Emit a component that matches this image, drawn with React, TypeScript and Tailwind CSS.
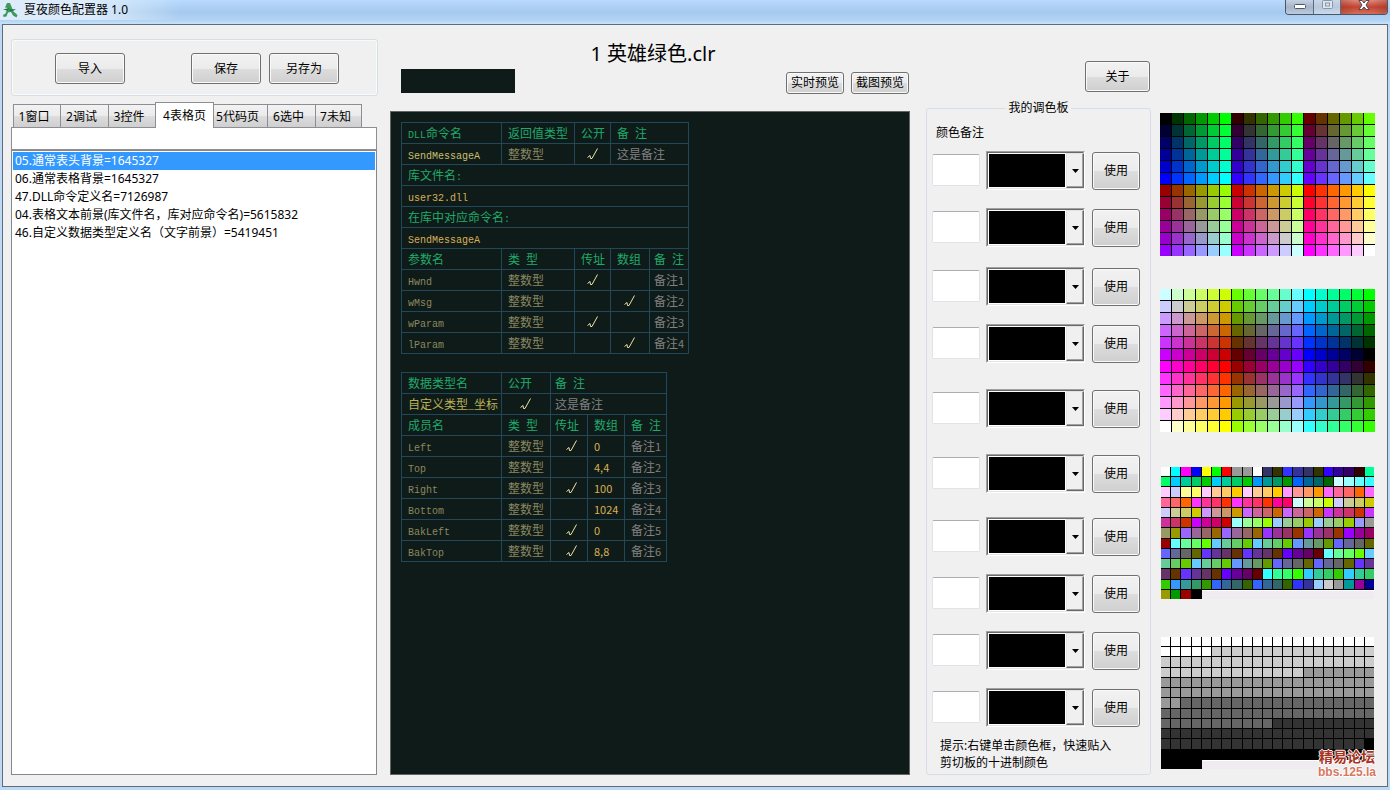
import type { ReactNode } from "react";
import { clsx } from "clsx";

const TABS = [
  { label: "1窗口", width: "w-12" },
  { label: "2调试", width: "w-[49px]" },
  { label: "3控件", width: "w-12" },
  { label: "4表格页", width: "w-[59px]", active: true },
  { label: "5代码页", width: "w-[55px]" },
  { label: "6选中", width: "w-[49px]" },
  { label: "7未知", width: "w-[47px]" },
];

const ENTRIES = [
  "05.通常表头背景=1645327",
  "06.通常表格背景=1645327",
  "47.DLL命令定义名=7126987",
  "04.表格文本前景(库文件名，库对应命令名)=5615832",
  "46.自定义数据类型定义名（文字前景）=5419451",
];

// space above each row of the custom palette
const PALETTE_ROWS = [
  "mt-2.5",
  "mt-4.5",
  "mt-5",
  "mt-4.5",
  "mt-[26px]",
  "mt-[26px]",
  "mt-6",
  "mt-4.5",
  "mt-4.5",
  "mt-4.5",
];

const STEPS = ["00", "33", "66", "99", "cc", "ff"];

// 18 x 12 cube, three red levels side by side in each half
const CUBE = Array.from({ length: 12 * 18 }, (_, i) => {
  const row = Math.floor(i / 18);
  const col = i % 18;
  const red = Math.floor(col / 6) + (row >= 6 ? 3 : 0);
  return `#${STEPS[red]}${STEPS[col % 6]}${STEPS[row % 6]}`;
});

const WHEEL = Array.from({ length: 12 * 18 }, (_, i) => {
  const row = Math.floor(i / 18);
  const col = i % 18;
  const block = Math.floor(col / 6);
  const up = STEPS[col % 6];
  const down = STEPS[5 - (col % 6)];
  const top = row < 6;
  const second = top ? STEPS[5 - row] : STEPS[row - 6];
  if (block === 0) return `#${top ? "cc" : "ff"}${second}${down}`;
  if (block === 1) return `#${top ? "66" : "99"}${second}${up}`;
  return `#${top ? "00" : "33"}${second}${down}`;
});

const MIXED = `
fff 0ff f0f 00f ff0 0f0 f00 999 999 fff 336 330 33f 339 336 330 30f 309 306 300 0f9
0f6 0cf 0c9 0c6 0c0 0cf 0c9 0c6 0c0 09f 099 096 090 06f 069 066 060 cff 9ff 6ff 3ff
fcf ccf ff9 ff6 fcf fc9 fc6 fc0 fcf fc9 fc6 fc0 f9f f99 f96 f90 f6f f69 f66 f60 f6f
f69 f66 f60 f3f f39 f36 f30 f3f f39 f36 f30 f09 f06 cff cf9 cf6 cf0 ccf cc9 cc6 cc0
ccf cc9 cc6 cc0 c9f c99 c96 c90 c6f c69 c66 c60 c6f c69 c66 c60 c3f c39 c36 c30 c3f
c39 c36 c30 c0f c09 c06 c00 9ff 9f9 9f6 9f0 9cf 9c9 9c6 9c0 9cf 9c9 9c6 9c0 99f 999
996 990 96f 969 966 960 96f 969 966 960 93f 939 936 930 93f 939 936 930 90f 909 906
900 6ff 6f9 6f6 6f0 6cf 6c9 6c6 6c0 6cf 6c9 6c6 6c0 69f 699 696 690 66f 669 666 660
66f 669 666 660 63f 639 636 630 63f 639 636 630 60f 609 606 600 6ff 6f9 6f6 6f0 6cf
6c9 6c6 6c0 6cf 6c9 6c6 6c0 69f 699 696 690 66f 669 666 660 66f 669 666 660 63f 639
636 630 63f 639 636 630 60f 609 606 600 3ff 3f9 3f6 3f0 3cf 3c9 3c6 3c0 3cf 3c9 3c6
3c0 39f 399 396 390 36f 369 366 360 36f 369 366 360 33f 339 9cf ccc 999 099 909 009
990 090 900 000`
  .trim()
  .split(/\s+/)
  .map((c) => `#${c}`);

const GREYS = Array.from({ length: 256 }, (_, i) => {
  if (i < 26) return "#fff";
  if (i < 77) return "#ccc";
  if (i < 128) return "#999";
  if (i < 179) return "#666";
  if (i < 230) return "#333";
  return "#000";
});

function Button({ className, children }: { className?: string; children: ReactNode }) {
  return (
    <button
      type="button"
      className={clsx(
        "shrink-0 whitespace-nowrap rounded-[3px] border border-[#707070] bg-[linear-gradient(#f2f2f2,#ebebeb_50%,#dddddd_50%,#cfcfcf)] text-center shadow-[inset_0_0_0_1px_#fafafa]",
        className,
      )}
    >
      {children}
    </button>
  );
}

function Check() {
  return (
    <svg className="mx-auto block h-3 w-3" viewBox="0 0 12 12" fill="none" stroke="#efe3a4" aria-hidden="true">
      <path d="M.5 9.500 L3 7.500 L3.500 10.500 L5 10.500 L10.500 .5" />
    </svg>
  );
}

// Latin runs sit at half the width of a Chinese character
function Mono({ text }: { text: string }) {
  return (
    <>
      {text.split(/([\x20-\x7e]+)/).map((part, i) =>
        i % 2 ? (
          <span
            key={i}
            className={clsx(
              "leading-none",
              /^[\d,]+$/.test(part) ? "font-['Noto_Sans_CJK_SC',sans-serif] text-[11px]" : "text-[10px]",
            )}
          >
            {part}
          </span>
        ) : (
          part
        ),
      )}
    </>
  );
}

type CellProps = { color?: string; span?: number; shift?: boolean; children?: string };

function Cell({ color = "text-[#8a8860]", span, shift, children = "" }: CellProps) {
  const isCheck = children === "√";
  return (
    <td
      colSpan={span}
      className={clsx(
        "h-[21px] border border-[#21475b] p-0 whitespace-pre align-middle leading-4",
        isCheck ? "text-center" : shift ? "pt-[3px] pl-1" : "pt-[3px] pl-1.5",
        isCheck && shift && "pl-1.5",
        color,
      )}
    >
      {isCheck ? (
        <Check />
      ) : (
        <div className="h-4">
          <Mono text={children} />
        </div>
      )}
    </td>
  );
}

const HEAD = "text-[#1faa6d]";
const NAME = "text-[#cbbf6c]";
const VALUE = "text-[#d8b055]";
const NOTE = "text-[#808080]";

const PARAMS = [
  ["Hwnd", "√", "", "备注1"],
  ["wMsg", "", "√", "备注2"],
  ["wParam", "√", "", "备注3"],
  ["lParam", "", "√", "备注4"],
];

const MEMBERS = [
  ["Left", "√", "0", "备注1"],
  ["Top", "", "4,4", "备注2"],
  ["Right", "√", "100", "备注3"],
  ["Bottom", "", "1024", "备注4"],
  ["BakLeft", "√", "0", "备注5"],
  ["BakTop", "√", "8,8", "备注6"],
];

const TABLE =
  "table-fixed border-collapse font-['Liberation_Mono','Noto_Sans_CJK_SC',monospace] text-xs";

function CommandTable() {
  return (
    <table className={clsx(TABLE, "w-[288px]")}>
      <colgroup>
        <col className="w-[100px]" />
        <col className="w-[73px]" />
        <col className="w-9" />
        <col className="w-[39px]" />
        <col className="w-[39px]" />
      </colgroup>
      <tbody>
        <tr>
          <Cell color={HEAD}>DLL命令名</Cell>
          <Cell color={HEAD}>返回值类型</Cell>
          <Cell color={HEAD}>公开</Cell>
          <Cell color={HEAD} span={2}>备 注</Cell>
        </tr>
        <tr>
          <Cell color={NAME}>SendMessageA</Cell>
          <Cell>整数型</Cell>
          <Cell>√</Cell>
          <Cell color={NOTE} span={2}>这是备注</Cell>
        </tr>
        <tr><Cell color={HEAD} span={5}>库文件名:</Cell></tr>
        <tr><Cell color={VALUE} span={5}>user32.dll</Cell></tr>
        <tr><Cell color={HEAD} span={5}>在库中对应命令名:</Cell></tr>
        <tr><Cell color={VALUE} span={5}>SendMessageA</Cell></tr>
        <tr>
          <Cell color={HEAD}>参数名</Cell>
          <Cell color={HEAD}>类 型</Cell>
          <Cell color={HEAD}>传址</Cell>
          <Cell color={HEAD}>数组</Cell>
          <Cell color={HEAD} shift>备 注</Cell>
        </tr>
        {PARAMS.map(([name, byRef, array, note]) => (
          <tr key={name}>
            <Cell>{name}</Cell>
            <Cell>整数型</Cell>
            <Cell>{byRef}</Cell>
            <Cell>{array}</Cell>
            <Cell color={NOTE} shift>{note}</Cell>
          </tr>
        ))}
      </tbody>
    </table>
  );
}

function TypeTable() {
  return (
    <table className={clsx(TABLE, "mt-[18px] w-[266px]")}>
      <colgroup>
        <col className="w-[100px]" />
        <col className="w-[49px]" />
        <col className="w-[37px]" />
        <col className="w-[37px]" />
        <col className="w-[42px]" />
      </colgroup>
      <tbody>
        <tr>
          <Cell color={HEAD}>数据类型名</Cell>
          <Cell color={HEAD}>公开</Cell>
          <Cell color={HEAD} shift span={3}>备 注</Cell>
        </tr>
        <tr>
          <Cell color="text-[#bbb152]">自定义类型_坐标</Cell>
          <Cell>√</Cell>
          <Cell color={NOTE} shift span={3}>这是备注</Cell>
        </tr>
        <tr>
          <Cell color={HEAD}>成员名</Cell>
          <Cell color={HEAD}>类 型</Cell>
          <Cell color={HEAD} shift>传址</Cell>
          <Cell color={HEAD}>数组</Cell>
          <Cell color={HEAD}>备 注</Cell>
        </tr>
        {MEMBERS.map(([name, byRef, array, note]) => (
          <tr key={name}>
            <Cell>{name}</Cell>
            <Cell>整数型</Cell>
            <Cell shift>{byRef}</Cell>
            <Cell color={VALUE}>{array}</Cell>
            <Cell color={NOTE}>{note}</Cell>
          </tr>
        ))}
      </tbody>
    </table>
  );
}

function Swatches({ colors, className }: { colors: string[]; className: string }) {
  return (
    <div className={clsx("grid gap-px bg-black", className)}>
      {colors.map((color, i) => (
        <span key={i} style={{ backgroundColor: color }} />
      ))}
      {colors.length === 256 && <span className="col-span-17 border-t border-white bg-[#eeecee]" />}
    </div>
  );
}

function TitleBar() {
  return (
    <header className="flex h-6 items-start bg-[linear-gradient(#b9dafd,#a6c9ee_50%,#b2d3f3_85%,#c6e4f9)] pr-0.5">
      <div className="flex h-5 flex-1 items-center gap-1.5 bg-[linear-gradient(90deg,#dcecfb,#dcecfb_90px,transparent_180px)] pl-0.5">
        <svg className="size-4" viewBox="0 0 16 16" aria-hidden="true">
          <path
            d="M5 1h3l3.500 8.500 4 3.500-1 2.500-3.500-2-2-3.500-3 .5-1.500 4-3 .5-.5-2 2.500-1.500L5.500 6 3 5.500z"
            fill="#3f9a5c"
          />
          <path d="M6.500 5.500 6 8.500l2-.3zM1 7.500l4-1 4 1 5-.5-3.500 2.200L5 8.500z" fill="#237443" />
        </svg>
        <h1 className="text-xs">夏夜颜色配置器 1.0</h1>
      </div>
      <div className="flex h-[15px] overflow-hidden rounded-b-[4px] border border-t-0 border-[#4a5566]">
        <button
          type="button"
          aria-label="最小化"
          className="flex w-7 items-center justify-center border-r border-[#5f6c80] bg-[linear-gradient(#c5d2e2,#a4b4c9_50%,#bccbde)]"
        >
          <svg className="h-1.5 w-3" viewBox="0 0 12 6">
            <rect x=".5" y=".5" width="11" height="4" rx="1" fill="#fff" stroke="#535666" />
          </svg>
        </button>
        <button
          type="button"
          aria-label="最大化"
          className="flex w-[27px] justify-center border-r border-[#5f6c80] bg-[linear-gradient(#c9d8e9,#b8c9dd_50%,#cbdaea)]"
        >
          <svg className="h-[9px] w-[11px]" viewBox="0 0 11 9" fill="#dce6f0" stroke="#8996a8">
            <rect x=".5" y=".5" width="10" height="8" rx="1" />
            <rect x="3.500" y="3" width="4" height="3" />
          </svg>
        </button>
        <button
          type="button"
          aria-label="关闭"
          className="flex w-[46px] justify-center bg-[linear-gradient(90deg,#8f2a1d55,transparent_30%,transparent_70%,#8f2a1d55),linear-gradient(#dd8a7b,#c24432_50%,#d4705c)]"
        >
          <svg className="h-2.5 w-3" viewBox="0 0 12 10">
            <path
              d="M1 .5h3l2 2.500 2-2.500h3L8 5l3 4.500H8.200L6 7 3.800 9.500H1L4 5z"
              fill="#fff"
              stroke="#4f4654"
            />
          </svg>
        </button>
      </div>
    </header>
  );
}

function FilePanel() {
  return (
    <section className="flex w-[367px] shrink-0 flex-col pt-3.5">
      <div className="flex h-[57px] rounded-[3px] border border-[#d5dfe5] pt-[13px] pl-[43px] shadow-[inset_0_0_0_1px_#fafafa]">
        <Button className="h-[31px] w-[70px]">导入</Button>
        <Button className="ml-[66px] h-[31px] w-[70px]">保存</Button>
        <Button className="ml-2 h-[31px] w-[70px]">另存为</Button>
      </div>

      <div className="mt-1.5 ml-0.5 flex items-end" role="tablist">
        {TABS.map((tab) => (
          <button
            key={tab.label}
            type="button"
            role="tab"
            aria-selected={!!tab.active}
            className={clsx(
              "-mr-px border border-b-0 border-[#8c8e94] whitespace-nowrap",
              tab.width,
              tab.active
                ? "relative -mb-px h-[26px] bg-white"
                : "h-[23px] bg-[linear-gradient(#f2f2f2,#ebebeb_50%,#dddddd_50%,#cfcfcf)] pt-0.5 pr-1.5",
            )}
          >
            {tab.label}
          </button>
        ))}
      </div>
      <div className="mr-px flex flex-1 flex-col">
        <input aria-label="数值" className="h-[23px] w-full border border-[#8c8e94] bg-white px-1 outline-none" />
        <ul className="flex-1 border border-[#828790] bg-white pt-px">
          {ENTRIES.map((entry, i) => (
            <li
              key={entry}
              className={clsx("mx-px h-[18px] px-0.5 leading-[18px]", i === 0 && "bg-[#3399ff] text-white")}
            >
              {entry}
            </li>
          ))}
        </ul>
      </div>
    </section>
  );
}

function Preview() {
  return (
    <section className="ml-3 flex min-w-0 flex-1 flex-col pt-[15px]">
      <h2 className="pl-1.5 text-center text-xl leading-7">1 英雄绿色.clr</h2>
      <div className="mt-px flex items-start pr-px pl-[11px]">
        <div className="h-6 w-[114px] bg-[#0f1b19]" />
        <div className="mt-[3px] ml-auto flex gap-[7px]">
          <Button className="h-[22px] w-[58px]">实时预览</Button>
          <Button className="h-[22px] w-[58px]">截图预览</Button>
        </div>
      </div>
      <div className="mt-[17px] flex-1 border border-[#646464] bg-[#0f1b19] pt-2.5 pl-2.5">
        <CommandTable />
        <TypeTable />
      </div>
    </section>
  );
}

function MyPalette() {
  return (
    <section className="ml-4 flex w-[225px] shrink-0 flex-col pt-9">
      <Button className="mr-px h-[31px] w-[65px] self-end">关于</Button>
      <fieldset className="mt-2 flex-1 rounded-[3px] border border-[#d5dfe5] px-[5px]">
        <legend className="mx-auto px-0.5 leading-4">我的调色板</legend>
        <p className="mt-[9px] pl-1 leading-4">颜色备注</p>
        {PALETTE_ROWS.map((space, i) => (
          <div key={i} className={clsx("flex items-start", space)}>
            <input
              aria-label={`颜色备注 ${i + 1}`}
              className="mt-[3px] h-8 w-12 rounded-[2px] border border-[#e2e3ea] border-t-[#abadb3] bg-white px-1 outline-none"
            />
            <div className="relative ml-1.5 h-[39px] w-[99px] border border-t-[#a0a0a0] border-r-white border-b-white border-l-[#a0a0a0]">
              <select
                aria-label={`颜色 ${i + 1}`}
                className="block size-full appearance-none border border-t-[#696969] border-r-[#e3e3e3] border-b-[#e3e3e3] border-l-[#696969] bg-black pr-5 text-black shadow-[inset_0_0_0_1px_#fff] outline-none"
              >
                <option value="#000000" />
              </select>
              <span className="pointer-events-none absolute inset-y-px right-0 flex w-[18px] items-center justify-center border border-t-[#e3e3e3] border-r-[#696969] border-b-[#696969] border-l-[#e3e3e3] bg-[#f0f0f0] shadow-[-1px_0_0_#fff,inset_-1px_-1px_0_#a0a0a0]">
                <svg className="h-1 w-[7px]" viewBox="0 0 7 4" aria-hidden="true">
                  <path d="M0 0h7L3.500 4z" />
                </svg>
              </span>
            </div>
            <Button className="mt-px ml-[7px] h-[38px] w-12">使用</Button>
          </div>
        ))}
        <p className="mt-2.5 pl-2 leading-[17px]">
          提示:右键单击颜色框，快速贴入
          <br />
          剪切板的十进制颜色
        </p>
      </fieldset>
    </section>
  );
}

export default function App() {
  return (
    <div className="flex min-h-screen flex-col bg-[#bcd8f4] font-['Noto_Sans','Noto_Sans_CJK_SC',sans-serif] text-xs text-black">
      <TitleBar />
      <main className="mx-0.5 mb-[3px] flex flex-1 border border-[#5d6b7a] bg-[#f0f0f0] pr-3 pb-[11px] pl-2">
        <FilePanel />
        <Preview />
        <MyPalette />
        <section className="relative ml-[9px] w-[215px] shrink-0 pt-22">
          <Swatches colors={CUBE} className="h-[143px] grid-cols-18 grid-rows-12" />
          <Swatches colors={WHEEL} className="mt-[33px] h-[143px] grid-cols-18 grid-rows-12" />
          <Swatches colors={MIXED} className="mx-px mt-[35px] h-[132px] grid-cols-21 grid-rows-13" />
          <Swatches colors={GREYS} className="mx-px mt-[38px] h-[132px] grid-cols-21 grid-rows-13" />
          <p className="absolute -right-px -bottom-1 text-center font-['Liberation_Sans','Noto_Sans_CJK_SC',sans-serif] font-bold [text-shadow:1px_0_#fff,-1px_0_#fff,0_1px_#fff,0_-1px_#fff]">
            <span className="block text-sm leading-4 text-[#a8321c]">精易论坛</span>
            <span className="block text-xs leading-[14px] text-[#d9775d]">bbs.125.la</span>
          </p>
        </section>
      </main>
    </div>
  );
}
